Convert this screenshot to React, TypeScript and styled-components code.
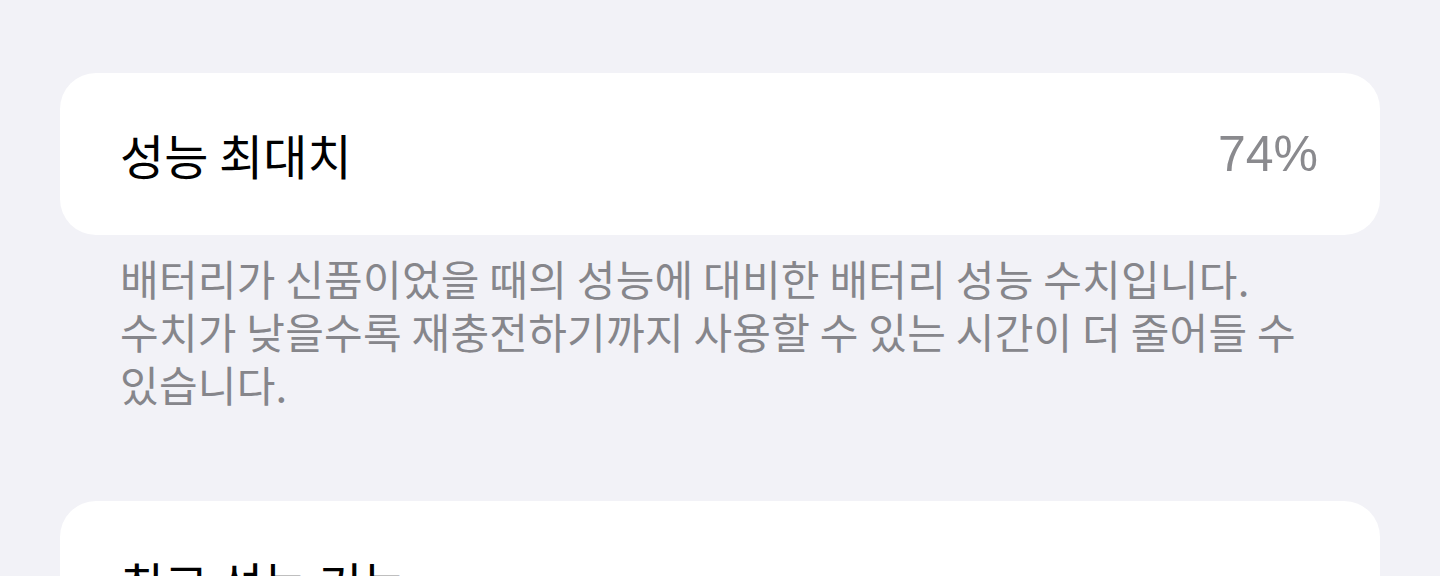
import styled, { createGlobalStyle } from 'styled-components';

const GlobalStyle = createGlobalStyle`
  html, body {
    margin: 0;
    padding: 0;
    overflow: hidden;
    background: #f2f2f7;
  }
  body {
    font-family: "Noto Sans CJK KR", "Noto Sans", sans-serif;
    -webkit-font-smoothing: antialiased;
  }
`;

const Page = styled.main`
  padding: 73px 60px 0;
  display: flex;
  flex-direction: column;
`;

const Section = styled.section<{ $gap?: number }>`
  display: flex;
  flex-direction: column;
  margin-bottom: ${(p) => p.$gap ?? 0}px;
`;

const Card = styled.div`
  background: #ffffff;
  border-radius: 36px;
  height: 162px;
  padding: 0 62px 0 60px;
  display: flex;
  align-items: center;
  justify-content: space-between;
`;

const Label = styled.span`
  font-size: 48px;
  color: #000000;
`;

const Value = styled.span`
  font-family: "Liberation Sans", "Noto Sans", sans-serif;
  font-size: 50px;
  color: #8a8a8e;
`;

const Footer = styled.p`
  margin: 16px 0 0;
  padding: 0 60px;
  font-size: 42px;
  line-height: 53px;
  color: #86868b;
  white-space: nowrap;
  letter-spacing: 0.25px;
`;

function App() {
  return (
    <>
      <GlobalStyle />
      <Page>
        <Section $gap={91}>
          <Card>
            <Label>성능 최대치</Label>
            <Value>74%</Value>
          </Card>
          <Footer>
            배터리가 신품이었을 때의 성능에 대비한 배터리 성능 수치입니다.
            <br />
            수치가 낮을수록 재충전하기까지 사용할 수 있는 시간이 더 줄어들 수
            <br />
            있습니다.
          </Footer>
        </Section>
        <Section>
          <Card>
            <Label>최고 성능 기능</Label>
          </Card>
        </Section>
      </Page>
    </>
  );
}

export default App;
